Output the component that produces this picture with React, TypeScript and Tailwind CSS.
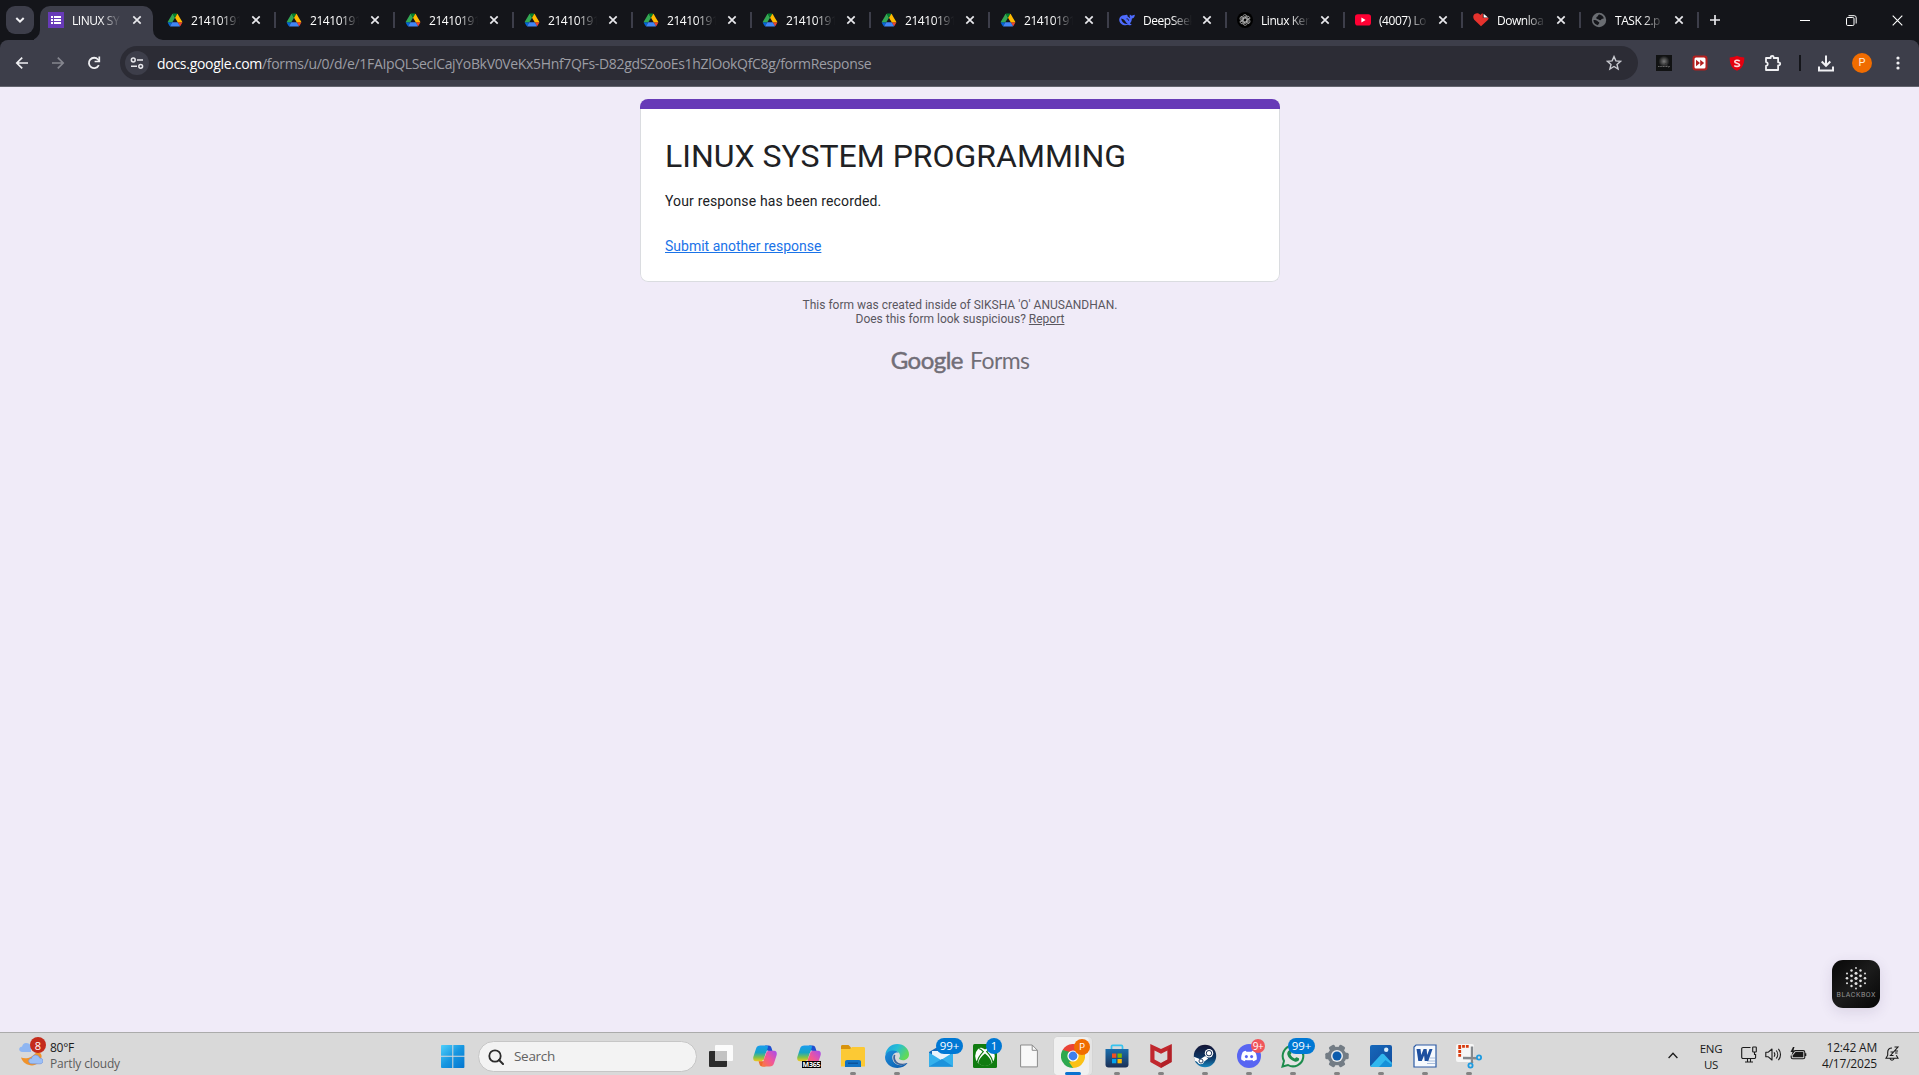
import React from "react";

type Kids = { children?: React.ReactNode };

/* ---------- favicons ---------- */

const FormsIcon = () => (
  <svg width="16" height="16" viewBox="0 0 16 16">
    <rect width="16" height="16" fill="#673ab7" />
    <g fill="#fff">
      <rect x="3" y="4" width="2" height="2" />
      <rect x="6" y="4" width="7" height="2" />
      <rect x="3" y="7" width="2" height="2" />
      <rect x="6" y="7" width="7" height="2" />
      <rect x="3" y="10" width="2" height="2" />
      <rect x="6" y="10" width="7" height="2" />
    </g>
  </svg>
);

const DriveIcon = () => (
  <svg width="16" height="16" viewBox="-4 -9 95 96">
    <path d="m6.6 66.85 3.85 6.65c.8 1.4 1.95 2.5 3.3 3.3l13.75-23.8h-27.5c0 1.55.4 3.1 1.2 4.5z" fill="#0066da" />
    <path d="m43.65 25-13.75-23.8c-1.35.8-2.5 1.9-3.3 3.3l-25.4 44a9.06 9.06 0 0 0 -1.2 4.5h27.5z" fill="#34a853" />
    <path d="m73.55 76.8c1.35-.8 2.5-1.9 3.3-3.3l1.6-2.75 7.65-13.25c.8-1.4 1.2-2.95 1.2-4.5h-27.5l5.85 11.5z" fill="#ea4335" />
    <path d="m43.65 25 13.75-23.8c-1.35-.8-2.9-1.2-4.5-1.2h-18.5c-1.6 0-3.15.45-4.5 1.2z" fill="#00832d" />
    <path d="m59.8 53h-32.3l-13.75 23.8c1.35.8 2.9 1.2 4.5 1.2h50.8c1.6 0 3.15-.45 4.5-1.2z" fill="#4285f4" />
    <path d="m73.4 26.5-12.7-22c-.8-1.4-1.95-2.5-3.3-3.3l-13.75 23.8 16.15 28h27.45c0-1.55-.4-3.1-1.2-4.5z" fill="#ffba00" />
  </svg>
);

const DeepSeekIcon = () => (
  <svg width="16" height="16" viewBox="0 0 16 16">
    <path d="M.2 7.4C.4 4.800 2.600 3.100 5 3.200c1.500 0 2.300-.8 3.300-.3.500.4-.2 1 .5 1.600 1 .9 1.700 1.500 2.400 1.600-.7-1.200-.7-2.400-.3-3.600.7.900 1.500 1.300 2.500 1.100.9-.3 1.600-.8 2.500-.9-.2 2.400-1.300 3.700-3 3.900-.1 2.200-.9 3.800-2 5 .5.500 1.300.7 1.900 1.200-1 .7-2.500.6-3.800-.1-3.400 1.400-8.900-.3-8.800-5.300z" fill="#4d6bfe" />
    <path d="M2.200 6.600c2.500.2 3.500 1.800 4.600 3.400.9 1.300 1.700 1.700 2.300 1.500-1.500.9-4 .2-5.500-1.600-.9-1.100-1.400-2.200-1.400-3.300z" fill="#14151a" />
    <path d="M7.500 6.800c1.200-.2 2.100.6 2.100 1.900" fill="none" stroke="#14151a" strokeWidth=".9" />
  </svg>
);

const ChatGptIcon = () => (
  <svg width="16" height="16" viewBox="0 0 16 16">
    <circle cx="8" cy="8" r="8" fill="#000" />
    <g fill="none" stroke="#c4c4c4" strokeWidth=".7">
      {[0, 60, 120, 180, 240, 300].map((a) => (
        <path key={a} transform={`rotate(${a} 8 8)`} d="M5.800 9.300V4.700a2.100 2.100 0 0 1 3.800-1.200L6.500 5.300V8" />
      ))}
    </g>
  </svg>
);

const YouTubeIcon = () => (
  <svg width="16" height="16" viewBox="0 0 16 16">
    <rect y="2.300" width="16" height="11.300" rx="2.800" fill="#f03" />
    <path d="M6.400 5.600 10.600 8l-4.200 2.400z" fill="#fff" />
  </svg>
);

const HeartIcon = () => (
  <svg width="16" height="16" viewBox="0 0 16 16">
    <path d="M8 14.300 1.200 7.700C-.3 6 0 3.300 1.700 2.100 3.600.8 6 1.200 7.400 2.900c.8-1 1.600-1.400 2.400-1.600v4.500h5.700c.2.700 0 1.400-.7 2.100z" fill="#e5322d" />
    <path d="M10.600 1.800 15 5.500h-4.400z" fill="#fff" />
  </svg>
);

const GlobeIcon = () => (
  <svg width="16" height="16" viewBox="0 0 16 16">
    <circle cx="8" cy="8" r="7.200" fill="#6a6d72" />
    <path d="M8.500 2.500c2 .3 3.700 1.700 4.300 3.800-1 .8-2.300.3-2.500 1.200-.3 1-2 .8-2.700.1-.8-.8-2.200-.4-2.300-1.700C5.200 4.500 6.700 5 6.900 4c.2-.8.800-1.500 1.600-1.500zM2.400 8c1.900 0 3.700.3 4.300 1.300.5.9 1.700.6 1.600 1.700-.1 1-1.200 1-1.300 2.200C4.300 12.800 2.500 10.700 2.400 8z" fill="#14151a" />
  </svg>
);

/* ---------- tab strip ---------- */

const CloseX = () => (
  <svg width="10" height="10" viewBox="0 0 10 10" className="shrink-0">
    <path d="M1.300 1.300 8.700 8.700M8.700 1.300 1.300 8.700" stroke="#e8e8ec" strokeWidth="1.700" />
  </svg>
);

const TabTitle = ({ children }: Kids) => (
  <span className="w-[49px] shrink-0 overflow-hidden whitespace-nowrap pt-px text-[12px] leading-4 text-white [mask-image:linear-gradient(to_right,#000_58%,transparent)]">
    {children}
  </span>
);

const drive = Array.from({ length: 8 }, () => ({ icon: <DriveIcon />, title: "21410191", wide: true }));
const tabs = [
  ...drive,
  { icon: <DeepSeekIcon />, title: "DeepSeek", wide: false },
  { icon: <ChatGptIcon />, title: "Linux Ker", wide: false },
  { icon: <YouTubeIcon />, title: "(4007) Lo", wide: false },
  { icon: <HeartIcon />, title: "Downloa", wide: false },
  { icon: <GlobeIcon />, title: "TASK 2.p", wide: false },
];

const TabStrip = () => (
  <div className="flex h-10 bg-[#14151a] font-['Open_Sans',sans-serif] tracking-[-0.45px]">
    <div className="ml-1.5 mt-1.5 flex h-7 w-7 items-center justify-center rounded-[9px] bg-[#3d3e4a]">
      <svg width="10" height="8" viewBox="0 0 10 8">
        <path d="M1.300 2 5 5.700 8.700 2" fill="none" stroke="#f2f2f5" strokeWidth="2" />
      </svg>
    </div>
    <div className="flex w-[6px] items-end overflow-hidden">
      <svg width="6" height="10" viewBox="4 0 6 10">
        <path d="M10 0v10H0A10 10 0 0 0 10 0z" fill="#3d3e4a" />
      </svg>
    </div>
    <div className="mt-1.5 flex w-[113px] items-center rounded-t-[10px] bg-[#3d3e4a] pb-[6px] pl-2">
      <FormsIcon />
      <div className="ml-2 flex">
        <TabTitle>LINUX SY</TabTitle>
      </div>
      <div className="ml-[11px] flex">
        <CloseX />
      </div>
    </div>
    <div className="flex w-[3px] items-end">
      <svg width="10" height="10" viewBox="0 0 10 10" className="shrink-0">
        <path d="M0 0v10h10A10 10 0 0 1 0 0z" fill="#3d3e4a" />
      </svg>
    </div>
    {tabs.map((t, i) => (
      <div key={i} className={`flex h-10 shrink-0 items-center ${t.wide ? "w-[119px]" : "w-[118px]"}`}>
        <div className="ml-[11px] flex w-4 shrink-0">{t.icon}</div>
        <div className="ml-2 flex">
          <TabTitle>{t.title}</TabTitle>
        </div>
        <div className={`flex ${t.wide ? "ml-[11px]" : "ml-[10px]"}`}>
          <CloseX />
        </div>
        <div className="-mr-px ml-auto h-4 w-0.5 bg-[#3d3e4a]" />
      </div>
    ))}
    <div className="ml-[11px] flex w-4 items-center">
      <svg width="12" height="12" viewBox="0 0 12 12">
        <path d="M6 1v10M1 6h10" stroke="#e8e8ec" strokeWidth="1.700" />
      </svg>
    </div>
    <div className="-mr-px ml-auto flex">
      <div className="flex w-[46px] items-center justify-center">
        <div className="h-px w-2.5 bg-white" />
      </div>
      <div className="flex w-[46px] items-center justify-center">
        <svg width="11" height="11" viewBox="0 0 11 11" fill="none" stroke="#fff">
          <rect x=".5" y="2.500" width="7.500" height="8" rx="1.200" />
          <path d="M2.500.7h5.700a2 2 0 0 1 2 2v5.800" />
        </svg>
      </div>
      <div className="flex w-[46px] items-center justify-center">
        <svg width="11" height="11" viewBox="0 0 11 11">
          <path d="M.7.7l9.600 9.600M10.300.7.7 10.300" stroke="#fff" strokeWidth="1.100" />
        </svg>
      </div>
    </div>
  </div>
);

/* ---------- toolbar ---------- */

const Slot = ({ children, w = "w-9" }: Kids & { w?: string }) => (
  <div className={`flex h-full shrink-0 items-center justify-center ${w}`}>{children}</div>
);

const Toolbar = () => (
  <div className="bg-[#14151a]">
    <div className="flex h-[47px] items-center rounded-t-lg border-b border-[#63646e] bg-[#3d3e4a] pl-1">
      <Slot>
        <svg width="14" height="14" viewBox="0 0 14 14" fill="none" stroke="#f0f0f3" strokeWidth="1.700">
          <path d="M13 7H2M7.200 1.600 1.800 7l5.400 5.400" />
        </svg>
      </Slot>
      <Slot>
        <svg width="14" height="14" viewBox="0 0 14 14" fill="none" stroke="#85868f" strokeWidth="1.700">
          <path d="M1 7h11M6.800 1.600 12.200 7l-5.400 5.400" />
        </svg>
      </Slot>
      <Slot>
        <svg width="14" height="14" viewBox="0 0 14 14" fill="none" stroke="#f0f0f3" strokeWidth="1.800">
          <path d="M11.800 9.200A5.200 5.200 0 1 1 11 3.500L12 4.700" />
          <path d="M12.300.6v4.900H7.600" strokeWidth="1.700" />
        </svg>
      </Slot>
      <div className="ml-2 flex h-[34px] w-[1518px] items-center rounded-full bg-[#2c2c35] pl-[5px] pr-4">
        <div className="flex h-6 w-6 items-center justify-center rounded-full bg-[#3d3e4a]">
          <svg width="14" height="14" viewBox="0 0 14 14" fill="none" stroke="#e8e8ec" strokeWidth="1.500">
            <circle cx="3.300" cy="4" r="1.900" />
            <path d="M7 4h6M1 10.300h6" />
            <circle cx="10.700" cy="10.300" r="1.900" />
          </svg>
        </div>
        <div className="ml-2 whitespace-nowrap font-['Open_Sans',sans-serif] text-[14px] text-[#9c9da4]">
          <span className="tracking-[-0.28px] text-white">docs.google.com</span>
          <span className="tracking-[-0.335px]">
            /forms/u/0/d/e/1FAIpQLSeclCajYoBkV0VeKx5Hnf7QFs-D82gdSZooEs1hZlOokQfC8g/formResponse
          </span>
        </div>
        <svg width="16" height="16" viewBox="0 0 16 16" className="ml-auto" fill="none" stroke="#c9cad0" strokeWidth="1.400">
          <path d="m8 1.600 1.900 4.300 4.700.4-3.600 3.100 1.100 4.600L8 11.500 3.900 14 5 9.400 1.400 6.300l4.700-.4z" />
        </svg>
      </div>
      <div className="ml-2 flex h-full">
        <Slot>
          <svg width="16" height="16" viewBox="0 0 16 16">
            <defs>
              <radialGradient id="bbx" cx=".5" cy=".4" r=".35">
                <stop offset="0" stopColor="#7a7a7a" />
                <stop offset="1" stopColor="#111213" />
              </radialGradient>
            </defs>
            <rect width="16" height="16" fill="#111213" />
            <rect width="16" height="16" fill="url(#bbx)" />
            <path d="M2 11.500h12" stroke="#666" strokeWidth="1" strokeDasharray="1.200 .4" />
            <path d="M9 8l4 5" stroke="#3a3a3a" />
          </svg>
        </Slot>
        <Slot>
          <svg width="16" height="16" viewBox="0 0 16 16">
            <rect x=".5" y=".5" width="15" height="15" rx="3" fill="#b3201f" />
            <rect x="2.500" y="2.500" width="11" height="11" rx="1.500" fill="#fff" />
            <path d="M4 4.800 8 8l-4 3.200zM8.200 4.800l4 3.200-4 3.200z" fill="#b3201f" />
          </svg>
        </Slot>
        <Slot w="w-[37px]">
          <svg width="16" height="16" viewBox="0 0 16 16">
            <path d="M8 .8c2.600 1.300 5 1.700 7.300 1.700 0 6-1.300 10.500-7.300 13.300C2 13 .7 8.500.7 2.500 3 2.500 5.400 2.100 8 .8z" fill="#e4000f" />
            <path d="M10.700 6.200C9.600 4.900 5.700 4.900 5.800 6.900c.1 1.700 4.700 1.100 4.700 3 0 1.800-4 2-5.200.5" fill="none" stroke="#ffd9dc" strokeWidth="1.600" />
          </svg>
        </Slot>
        <Slot>
          <svg width="18" height="18" viewBox="0 0 18 18" fill="none" stroke="#f0f0f3" strokeWidth="1.800">
            <path d="M2 4h4.700V3.300a1.500 1.500 0 0 1 3 0V4h4.400v4.300h.6a1.500 1.500 0 0 1 0 3h-.6V16H2v-4.200c2.400-.3 2.400-3.400 0-3.700z" strokeLinejoin="round" />
          </svg>
        </Slot>
        <Slot w="w-[17px]">
          <div className="h-4 w-0.5 bg-[#14151a]" />
        </Slot>
        <Slot>
          <svg width="16" height="17" viewBox="0 0 16 17" fill="none" stroke="#f0f0f3" strokeWidth="2">
            <path d="M8 .5v10M3.700 6.500 8 10.800l4.300-4.300M1 11.500V15.600h14v-4.100" />
          </svg>
        </Slot>
        <Slot>
          <div className="flex h-5 w-5 items-center justify-center rounded-full bg-[#f06c00] font-['Roboto',sans-serif] text-[11px] text-[#ffe9d6]">
            P
          </div>
        </Slot>
        <Slot>
          <svg width="4" height="14" viewBox="0 0 4 14" fill="#f0f0f3">
            <circle cx="2" cy="2" r="1.600" />
            <circle cx="2" cy="7" r="1.600" />
            <circle cx="2" cy="12" r="1.600" />
          </svg>
        </Slot>
      </div>
    </div>
  </div>
);

/* ---------- form page ---------- */

const dots: number[][] = [
  [24, 8, 0.9], [19.500, 10.500, 1.200], [28.500, 10.500, 1.200], [15, 13.500, 1], [24, 13.300, 1.500], [33, 13.500, 1],
  [19.500, 15.800, 1.400], [28.500, 15.800, 1.400], [15, 18.300, 1.300], [24, 18.300, 1.600], [33, 18.300, 1.300],
  [19.500, 20.800, 1.400], [28.500, 20.800, 1.400], [15, 23.300, 1], [24, 23.500, 1.500], [33, 23.300, 1],
  [19.500, 26, 1.200], [28.500, 26, 1.200], [24, 28.500, 0.9],
];

const FormPage = () => (
  <main className="relative flex flex-1 flex-col items-center bg-[#f0ebf8] pl-px pt-3 font-['Roboto',sans-serif]">
    <section className="w-[640px] overflow-hidden rounded-lg">
      <div className="h-2.5 bg-[#673ab7]" />
      <div className="h-[173px] rounded-b-lg border border-t-0 border-[#dadce0] bg-white px-6 pt-[26px] text-[#202124]">
        <h1 className="text-[32px] leading-[43px]">LINUX SYSTEM PROGRAMMING</h1>
        <p className="mt-[13px] text-[14px] leading-5 tracking-[0.15px]">Your response has been recorded.</p>
        <p className="mt-[25px] text-[14px] leading-5 text-[#1a73e8] underline">Submit another response</p>
      </div>
    </section>
    <div className="mt-4 text-center text-[12px] leading-[14px] text-[#5a575f]">
      <p>This form was created inside of SIKSHA 'O' ANUSANDHAN.</p>
      <p>
        Does this form look suspicious? <span className="underline">Report</span>
      </p>
    </div>
    <div className="mt-[18px] flex items-baseline gap-[7px] whitespace-nowrap font-['Lato',sans-serif] leading-8 text-[#716e77]">
      <span className="text-[24px] tracking-[-0.5px] [-webkit-text-stroke:0.5px_#716e77]">Google</span>
      <span className="text-[23px] tracking-[-0.6px]">Forms</span>
    </div>
    <div className="absolute bottom-[24px] right-[39px] h-12 w-12 overflow-hidden rounded-[11px] bg-gradient-to-br from-[#080808] via-[#1c1c1c] to-[#060606] shadow-[0_4px_14px_rgba(60,40,90,0.12)]">
      <svg width="48" height="48" viewBox="0 0 48 48">
        {dots.map(([x, y, r], i) => (
          <circle key={i} cx={x} cy={y} r={r} fill="#e2e2e2" />
        ))}
        <text x="4.500" y="37" textLength="39" fontFamily="Roboto, sans-serif" fontSize="7" fill="#929292">
          BLACKBOX
        </text>
      </svg>
    </div>
  </main>
);

/* ---------- taskbar icons ---------- */

const Badge = ({ children, className }: Kids & { className: string }) => (
  <div className={`absolute flex items-center justify-center rounded-full leading-none text-white ${className}`}>{children}</div>
);

const Copilot = ({ clipped = false }: { clipped?: boolean }) => (
  <svg width="24" height="24" viewBox="0 0 24 24">
    <defs>
      <linearGradient id="cpA" x1="0" y1="0" x2="0" y2="1">
        <stop offset="0" stopColor="#1a9cf0" />
        <stop offset=".45" stopColor="#17a5c4" />
        <stop offset=".75" stopColor="#7fc24a" />
        <stop offset="1" stopColor="#f4c81d" />
      </linearGradient>
      <linearGradient id="cpB" x1="1" y1="0" x2="0" y2="1">
        <stop offset="0" stopColor="#a44df0" />
        <stop offset=".5" stopColor="#f0569a" />
        <stop offset="1" stopColor="#fb7a3a" />
      </linearGradient>
    </defs>
    <path d="M12 1.500h3.500c2 0 2.700 1.200 3.200 3l.8 2.500h-5z" fill="#1f4fd0" />
    <path d="M7.500 1.500h6c1.300 0 1.700 1 1.300 2.200L11.500 14c-.8 2.300-1.700 3.300-3.500 3.300H3c-2.400 0-3.200-2-2.600-4.500L3 4.700c.7-2.200 2-3.200 4.500-3.200z" fill="url(#cpA)" />
    {!clipped && <path d="M12.500 22.500H9.500c-2 0-2.700-1.200-3.200-3l-.7-2.200h5z" fill="#ee6a2c" />}
    <path d="M16.500 22.500h-6c-1.300 0-1.700-1-1.300-2.200L12.500 10c.8-2.300 1.700-3.300 3.500-3.300h5c2.400 0 3.200 2 2.600 4.500L21 19.300c-.7 2.200-2 3.200-4.500 3.200z" fill="url(#cpB)" />
    <path d="M14 6.700h2c-1.800 0-2.700 1-3.500 3.300l-2.200 7H8c1.800 0 2.700-1 3.500-3.300z" fill="#f4f2f6" />
  </svg>
);

const TaskView = () => (
  <svg width="24" height="24" viewBox="0 0 24 24">
    <rect x="0" y="7" width="18" height="16" rx="1" fill="#2b2b2b" />
    <rect x="6" y="1" width="18" height="16" rx="1" fill="#fff" opacity=".88" />
    <rect x="6" y="7" width="12" height="10" fill="#c3c3c3" />
  </svg>
);

const Explorer = () => (
  <svg width="24" height="24" viewBox="0 0 24 24">
    <path d="M0 2.500C0 1.500.5 1 1.500 1h6L10 3.500V6H0z" fill="#d8930c" />
    <path d="M0 5h9l2-2h11.500c1 0 1.500.5 1.500 1.500v18H0z" fill="#fcc934" />
    <path d="M4 23v-5c0-1.200.8-2 2-2h12c1.200 0 2 .8 2 2v5z" fill="#1272c4" />
    <path d="M7 18.500h10V20H7z" fill="#0b539b" />
  </svg>
);

const Edge = () => (
  <svg width="24" height="24" viewBox="0 0 24 24">
    <defs>
      <linearGradient id="edA" x1="0" y1="0" x2="1" y2=".5">
        <stop offset="0" stopColor="#1b9de2" />
        <stop offset=".5" stopColor="#27bfd4" />
        <stop offset="1" stopColor="#62d957" />
      </linearGradient>
      <linearGradient id="edB" x1="0" y1="0" x2="1" y2="1">
        <stop offset="0" stopColor="#1b8fdc" />
        <stop offset="1" stopColor="#0d57a8" />
      </linearGradient>
    </defs>
    <path d="M.3 10.800C1 4.600 6 0 12.200 0 19 0 24 5 24 10.200c0 3.600-2.700 6-6 6-2.600 0-4-.8-4-1.600 0-.7 1-1.100 1-3C15 9.200 12.800 7 9.600 7 5 7 1.500 9.500.3 10.800z" fill="url(#edA)" />
    <path d="M.1 12.500C.8 8.600 4.500 6.600 8.200 6.600c2.500 0 4.200.8 5.200 1.900C9 8 7.300 11 7.300 13.600c0 4.400 4 8.700 9.800 7.600 2-.4 3.700-1.400 4.700-2.200.4-.2.700.1.400.6C20.300 22.300 16.500 24 12.500 24 5.500 24-.6 18.700.1 12.500z" fill="url(#edB)" />
    <path d="M8.900 10.800c-1.600 3.300-.3 7 2.600 9 3.500 2.200 8 1.400 10.300-.8-5 1.600-9.800.4-11.300-3.200-.7-1.700-.6-3.400-.1-4.800z" fill="#0c3e86" opacity=".75" />
  </svg>
);

const Mail = () => (
  <svg width="24" height="24" viewBox="0 0 24 24">
    <path d="M0 8 12 1l12 7v14.500H0z" fill="#1668b8" />
    <path d="M3 7h18v9H3z" fill="#e9f3fb" />
    <path d="M0 8.500 12 16l12-7.500v14H0z" fill="#35b1ec" />
    <path d="M0 22.500 13 15l11 7.500z" fill="#1d93dc" />
  </svg>
);

const Xbox = () => (
  <svg width="24" height="24" viewBox="0 0 24 24">
    <rect width="24" height="24" rx="1.500" fill="#107c10" />
    <circle cx="12" cy="12" r="9.800" fill="#fff" />
    <path d="M6 3.600c2-.6 4 .5 6 2 2-1.500 4-2.600 6-2-1.800-1.300-3.800-1.800-6-1.800S7.800 2.300 6 3.600zM12 9.500c3 2.400 6.500 6.500 6.700 9.600C17 21 14.500 22 12 22s-5-1-6.700-2.900C5.500 16 9 11.900 12 9.500z" fill="#107c10" />
    <path d="M5.800 4.500C7.500 4.800 9 6.200 10.300 7.700 7.600 10.500 5 14.300 4.300 17.800M18.200 4.500c-1.700.3-3.200 1.700-4.500 3.200 2.700 2.800 5.300 6.600 6 10.100" fill="none" stroke="#107c10" strokeWidth="1.200" />
  </svg>
);

const Doc = () => (
  <svg width="18" height="24" viewBox="0 0 18 24">
    <path d="M.6 1h11.600L17.400 6.300V22.900H.6z" fill="#f8f8f8" stroke="#8b8b8b" strokeWidth="1" />
    <path d="M12.200 1v5.300h5.200" fill="none" stroke="#8b8b8b" />
  </svg>
);

const Chrome = () => (
  <svg width="24" height="24" viewBox="0 0 24 24">
    <path d="M12 12 1.600 6A12 12 0 0 1 22.400 6z" fill="#ea4335" />
    <path d="M12 12 22.400 6A12 12 0 0 1 12 24z" fill="#fbc116" />
    <path d="M12 12v12A12 12 0 0 1 1.600 6z" fill="#2da94f" />
    <path d="M12 6.500h10.600L12 12z" fill="#ea4335" />
    <path d="M16.800 14.700 12 24l-4-6z" fill="#fbc116" />
    <path d="M7.200 14.700 1.600 6 9 8z" fill="#2da94f" />
    <circle cx="12" cy="12" r="5.600" fill="#fff" />
    <circle cx="12" cy="12" r="4.400" fill="#3f7fee" />
  </svg>
);

const Store = () => (
  <svg width="24" height="24" viewBox="0 0 24 24">
    <defs>
      <linearGradient id="st" x1="0" y1="0" x2="0" y2="1">
        <stop offset="0" stopColor="#1a6fae" />
        <stop offset="1" stopColor="#1c2f55" />
      </linearGradient>
    </defs>
    <path d="M6.500 7V2.500c0-.8.4-1.200 1.200-1.200h8.600c.8 0 1.200.4 1.200 1.200V7" fill="none" stroke="#36c3ef" strokeWidth="1.700" />
    <path d="M.5 5h23v15.500c0 2-1 3-3 3h-17c-2 0-3-1-3-3z" fill="url(#st)" />
    <rect x="7" y="9.500" width="4.300" height="4.300" fill="#f25022" />
    <rect x="12.500" y="9.500" width="4.300" height="4.300" fill="#7fba00" />
    <rect x="7" y="15" width="4.300" height="4.300" fill="#00a4ef" />
    <rect x="12.500" y="15" width="4.300" height="4.300" fill="#ffb900" />
  </svg>
);

const McAfee = () => (
  <svg width="24" height="24" viewBox="0 0 24 24">
    <path d="M1.300 0 12 5 22.700 0v18L12 24 1.300 18z" fill="#c1272d" />
    <path d="M5.500 6.500 12 9.800l6.500-3.300v9L12 19l-6.500-3.500z" fill="#d9d9d9" />
    <path d="M22.700 0v18L12 24v-5l6.500-3.500v-9z" fill="#a81e24" opacity=".6" />
  </svg>
);

const Steam = () => (
  <svg width="24" height="24" viewBox="0 0 24 24">
    <defs>
      <linearGradient id="sm" x1="0" y1="0" x2="0" y2="1">
        <stop offset="0" stopColor="#141434" />
        <stop offset=".6" stopColor="#0d3968" />
        <stop offset="1" stopColor="#1886bd" />
      </linearGradient>
    </defs>
    <circle cx="12" cy="12" r="11.200" fill="url(#sm)" />
    <path d="m1 12.700 6.200 2.600 5-3.300 3 2.500-4.200 3.200c-.3 3-5.700 3.600-6.600.4L1.500 16.500z" fill="#fff" />
    <circle cx="16" cy="9.200" r="4.200" fill="#fff" />
    <circle cx="16" cy="9.200" r="2.700" fill="#fff" stroke="#173158" strokeWidth="1" />
    <circle cx="8" cy="17" r="2" fill="#fff" stroke="#173158" strokeWidth=".9" />
  </svg>
);

const Discord = () => (
  <svg width="24" height="24" viewBox="0 0 24 24">
    <circle cx="12" cy="12" r="12" fill="#5865f2" />
    <path d="M8.800 6.800c-1.300.2-2.300.6-3 1.100C4.600 10 4 12.700 4.200 15.600c1 .8 2.300 1.400 3.500 1.700l.9-1.400c2.100.6 4.700.6 6.800 0l.9 1.400c1.200-.3 2.500-.9 3.500-1.700.2-2.900-.4-5.600-1.600-7.700-.7-.5-1.700-.9-3-1.100l-.6 1c-1.500-.2-3.700-.2-5.200 0z" fill="#fff" />
    <ellipse cx="9.400" cy="12.600" rx="1.500" ry="1.700" fill="#5865f2" />
    <ellipse cx="14.600" cy="12.600" rx="1.500" ry="1.700" fill="#5865f2" />
  </svg>
);

const WhatsApp = () => (
  <svg width="24" height="24" viewBox="0 0 24 24">
    <path d="M1.500 22.500 3 17a10.300 10.300 0 1 1 4 4z" fill="#e4e4e4" stroke="#1c8c4c" strokeWidth="2" />
    <path d="M8.300 6.200c.6-.3 1.200 0 1.400.6l.8 1.900c.2.600-.8 1.400-1 1.900.9 1.900 2.300 3.200 4.300 4 .6-.3 1.200-1.500 1.900-1.300l2.100 1c.5.3.3 1.400 0 1.900-1 1.500-2.600 1.700-4.200 1.200-3.800-1-6.300-3.600-7.200-6.600-.5-1.700.2-4 1.900-4.600z" fill="#1c8c4c" />
  </svg>
);

const Gear = () => (
  <svg width="24" height="24" viewBox="0 0 24 24">
    <g fill="#737c85">
      {[30, 90, 150].map((a) => (
        <rect key={a} x="8.800" y=".3" width="6.400" height="23.400" rx="1.500" transform={`rotate(${a} 12 12)`} />
      ))}
      <circle cx="12" cy="12" r="9.300" />
    </g>
    <circle cx="12" cy="12" r="6" fill="#e8eaec" />
    <circle cx="12" cy="12" r="4.500" fill="#0c5cad" />
  </svg>
);

const Photos = () => (
  <svg width="24" height="24" viewBox="0 0 24 24">
    <defs>
      <linearGradient id="ph" x1="0" y1="0" x2="1" y2="1">
        <stop offset="0" stopColor="#1668bb" />
        <stop offset="1" stopColor="#124b9b" />
      </linearGradient>
    </defs>
    <rect x="1" y="1" width="22" height="22" rx="2" fill="url(#ph)" />
    <path d="M1.500 22 12 10.500c1-1 2.200-1 3.200 0l7.600 8.200V21c0 1.300-.7 2-2 2H3c-.8 0-1.300-.4-1.500-1z" fill="#31b7ee" />
    <path d="m10 23 6.500-7 6.500 5c-.2 1.300-1 2-2 2z" fill="#1690d8" />
    <circle cx="17.200" cy="5.700" r="2.200" fill="#d7ecfa" />
  </svg>
);

const Word = () => (
  <svg width="24" height="24" viewBox="0 0 24 24">
    <path d="M3 1h20v22H1V3z" fill="#f6f9fd" stroke="#2c5ba5" strokeWidth="1.200" />
    <path d="M14 17h8M14 19.500h8M17 14h5" stroke="#a9bedc" />
    <path d="M3.500 5h4l.7 6 2.400-6h3l.6 6L16.500 5h3L15.300 17h-3.600l-.6-5.500L8.800 17H5.300z" fill="#1d4f9f" />
  </svg>
);

const Snip = () => (
  <svg width="26" height="26" viewBox="0 0 26 26">
    <rect x="0" y="1" width="18" height="18" rx="2" fill="#f6f6f6" />
    <path d="M2.300 3.300H13M3.700 3.300V14" fill="none" stroke="#d8390c" strokeWidth="2.800" strokeDasharray="2.800 1" />
    <path d="M16 3.500V20M21 15.300 7 15" stroke="#84888c" strokeWidth="2.400" fill="none" />
    <circle cx="23" cy="14.500" r="2.100" fill="#d9d9d9" stroke="#1e9be0" strokeWidth="1.800" />
    <circle cx="14.500" cy="22.500" r="2.100" fill="#d9d9d9" stroke="#1e9be0" strokeWidth="1.800" />
  </svg>
);

/* ---------- taskbar ---------- */

const TaskItem = ({ children, running }: Kids & { running?: boolean }) => (
  <div className="relative flex h-[42px] w-11 shrink-0 flex-col items-center pt-[11px]">
    <div className="flex h-6 items-center justify-center">{children}</div>
    {running && <div className="mt-[4px] h-[3px] w-1.5 rounded-full bg-[#838383]" />}
  </div>
);

const badgeBlue = "bg-[#0078d4] font-['Open_Sans',sans-serif] text-[11.500px]";

const Taskbar = () => (
  <footer className="flex h-[43px] border-t border-[#ababab] bg-[#d9d9d9] font-['Open_Sans',sans-serif]">
    <div className="flex w-[431px] pl-[19px]">
      <div className="relative mt-[9px] h-6 w-6">
        <svg width="24" height="24" viewBox="0 0 24 24">
          <path d="M3.500 10C.7 10-.2 8 .3 6.500c.4-1.200 1.500-1.800 2.700-1.700C3.500 2.500 5 1 7 1c2.500 0 4 1.300 5 3v6z" fill="#8fb6f2" />
          <path d="M2 15.500C7 17.500 13 16 18 9.500c4 1 5 3.500 4.500 5.500-1 5-5 8.400-9.500 8.400-5 0-9.500-3-11-7.900z" fill="#f0932b" />
          <path d="M13 21.800c-2.800 0-3.700-2-3.200-3.500.4-1.300 1.500-1.900 2.700-1.800.5-2.200 2-3.400 4-3.400 2.200 0 3.600 1.200 4.200 3 2 0 3.400 1.200 3.300 3-.1 1.600-1.200 2.700-3 2.700z" fill="#9cc0f7" stroke="#7396e0" strokeWidth=".7" />
        </svg>
        <Badge className="-top-[5px] left-[11px] h-4 w-4 bg-[#c42b1c] text-[11px]">8</Badge>
      </div>
      <div className="ml-[7px] mt-[7px] text-[12px] leading-4 tracking-[-0.25px] text-[#1b1b1b]">
        <p>80°F</p>
        <p className="tracking-[-0.15px] text-[#5c5c5c]">Partly cloudy</p>
      </div>
    </div>

    <TaskItem>
      <svg width="24" height="24" viewBox="0 0 24 24">
        <defs>
          <linearGradient id="win" x1="0" y1="0" x2="1" y2="1">
            <stop offset="0" stopColor="#4fd0fb" />
            <stop offset=".5" stopColor="#1796e0" />
            <stop offset="1" stopColor="#0476d0" />
          </linearGradient>
        </defs>
        <path d="M0 1.500Q0 1 1 1h10.300v10.800H0zM12.300 1H22.500q.9 0 .9.800v10H12.300zM0 12.800h11.300V24H1q-1 0-1-1zM12.300 12.800h11.100V23q0 1-.9 1H12.300z" fill="url(#win)" />
      </svg>
    </TaskItem>
    <div className="ml-[3px] mt-[8px] flex h-[31px] w-[219px] items-center rounded-full border border-[#c6c6c6] bg-[#f3f3f3] pl-[9px]">
      <svg width="16" height="16" viewBox="0 0 16 16" fill="none" stroke="#2b2b2b" strokeWidth="1.800">
        <circle cx="7" cy="7" r="5.700" />
        <path d="m11 11 4 4" strokeWidth="2" strokeLinecap="round" />
      </svg>
      <span className="ml-[10px] text-[13.500px] tracking-[-0.300px] text-[#626262]">Search</span>
    </div>
    <div className="w-0.5" />
    <TaskItem><TaskView /></TaskItem>
    <TaskItem><Copilot /></TaskItem>
    <TaskItem>
      <div className="relative h-6 w-6">
        <Copilot clipped />
        <div className="absolute left-[5px] top-[17px] flex h-[7px] w-[19px] items-center justify-center bg-black text-[7px] font-bold leading-none tracking-[-0.2px] text-white">
          M365
        </div>
      </div>
    </TaskItem>
    <TaskItem running><Explorer /></TaskItem>
    <TaskItem running><Edge /></TaskItem>
    <TaskItem>
      <Mail />
      <Badge className={`left-[17px] top-[5px] h-4 w-[27px] ${badgeBlue}`}>99+</Badge>
    </TaskItem>
    <TaskItem>
      <Xbox />
      <Badge className={`left-[23px] top-[5px] h-4 w-4 ${badgeBlue}`}>1</Badge>
    </TaskItem>
    <TaskItem><Doc /></TaskItem>
    <div className="relative flex h-[42px] w-11 flex-col items-center">
      <div className="absolute left-[3px] top-[4px] h-[38px] w-[38px] rounded bg-[#e4e4e4] shadow-[0_0_0_0.5px_#cfcfcf]" />
      <div className="absolute left-[3px] top-[4px] h-[38px] w-[35px] rounded bg-[#f0f0f0]" />
      <div className="relative mt-[11px]"><Chrome /></div>
      <div className="absolute top-[39px] h-[3px] w-4 rounded-full bg-[#0a72cf]" />
      <Badge className="left-[23px] top-[6px] h-4 w-4 bg-[#f06c00] font-['Roboto',sans-serif] text-[9px]">P</Badge>
    </div>
    <TaskItem running><Store /></TaskItem>
    <TaskItem running><McAfee /></TaskItem>
    <TaskItem running><Steam /></TaskItem>
    <TaskItem running>
      <Discord />
      <Badge className="left-[24px] top-[6px] h-[14px] w-[14px] bg-[#f0565b] text-[10px] tracking-[-0.500px]">9+</Badge>
    </TaskItem>
    <TaskItem running>
      <WhatsApp />
      <Badge className={`left-[17px] top-[5px] h-4 w-[27px] ${badgeBlue}`}>99+</Badge>
    </TaskItem>
    <TaskItem running><Gear /></TaskItem>
    <TaskItem running><Photos /></TaskItem>
    <TaskItem running><Word /></TaskItem>
    <TaskItem running><Snip /></TaskItem>

    <div className="ml-auto flex h-[42px] items-center pr-[19px] text-[12px] leading-4 text-[#1b1b1b]">
      <svg width="10" height="7" viewBox="0 0 10 7" fill="none" stroke="#1b1b1b" strokeWidth="1.300" className="mt-0.5">
        <path d="M.6 6 5 1.200 9.400 6" />
      </svg>
      <div className="ml-[20px] mt-[6px] w-[26px] text-center text-[11.500px] tracking-[-0.300px]">
        <p>ENG</p>
        <p>US</p>
      </div>
      <div className="ml-[17px] mt-px flex gap-2">
        <svg width="16" height="17" viewBox="0 0 16 17" fill="none" stroke="#1b1b1b" strokeWidth="1.100">
          <path d="M9.500 1.500H2a1.300 1.300 0 0 0-1.300 1.300v8.400a1.300 1.300 0 0 0 1.300 1.300h11.300a1.300 1.300 0 0 0 1.300-1.300V8M4 16h8M6.500 12.500V16M9.500 12.500V16" />
          <rect x="11.700" y="1" width="3.600" height="5" rx=".6" />
          <path d="M13.500 6v3" />
        </svg>
        <svg width="17" height="17" viewBox="0 0 17 17" fill="none" stroke="#1b1b1b" strokeWidth="1.100">
          <path d="M.8 6.200h2.500L7 3v11l-3.700-3.200H.8z" strokeLinejoin="round" />
          <path d="M9 6.300c1 1.300 1 3.100 0 4.400M11.200 4.500c2 2.300 2 5.700 0 8M13.400 2.800c2.800 3.300 2.800 8.100 0 11.400" />
        </svg>
        <svg width="17" height="17" viewBox="0 0 17 17">
          <path d="M4.500 4.600h8.700a1.600 1.600 0 0 1 1.600 1.600v5a1.600 1.600 0 0 1-1.600 1.600H2.800a1.600 1.600 0 0 1-1.600-1.600V9.500" fill="none" stroke="#1b1b1b" strokeWidth="1.100" />
          <path d="M5.500 6h7.800v5.300H2.700V9.500z" fill="#1b1b1b" />
          <path d="M15 7.300h1.300v2.600H15z" fill="#1b1b1b" />
          <path d="M3 1 .5 6h2L1.500 9.500 5.500 4.600H3.400L4.500 1z" fill="#1b1b1b" />
        </svg>
      </div>
      <div className="ml-[10px] mt-[4px] w-[60px] whitespace-nowrap text-right tracking-[-0.200px]">
        <p className="flex justify-end">12:42 AM</p>
        <p className="flex justify-end">4/17/2025</p>
      </div>
      <svg width="15" height="16" viewBox="0 0 15 16" fill="none" stroke="#1b1b1b" strokeWidth="1.100" className="ml-[8px]">
        <path d="M7 2C4.300 2 2.700 4 2.700 6.500v2.700L1 12.300h12l-1.700-3M5 12.500c.3 2.200 3.700 2.200 4 0" />
        <path d="M5.500 6h3L5.500 9.500h3M9.500 1h3.500L9.500 5H13M10 7h2.500" />
      </svg>
    </div>
  </footer>
);

export default function App() {
  return (
    <div className="flex h-[1075px] w-[1919px] flex-col overflow-hidden">
      <TabStrip />
      <Toolbar />
      <FormPage />
      <Taskbar />
    </div>
  );
}
